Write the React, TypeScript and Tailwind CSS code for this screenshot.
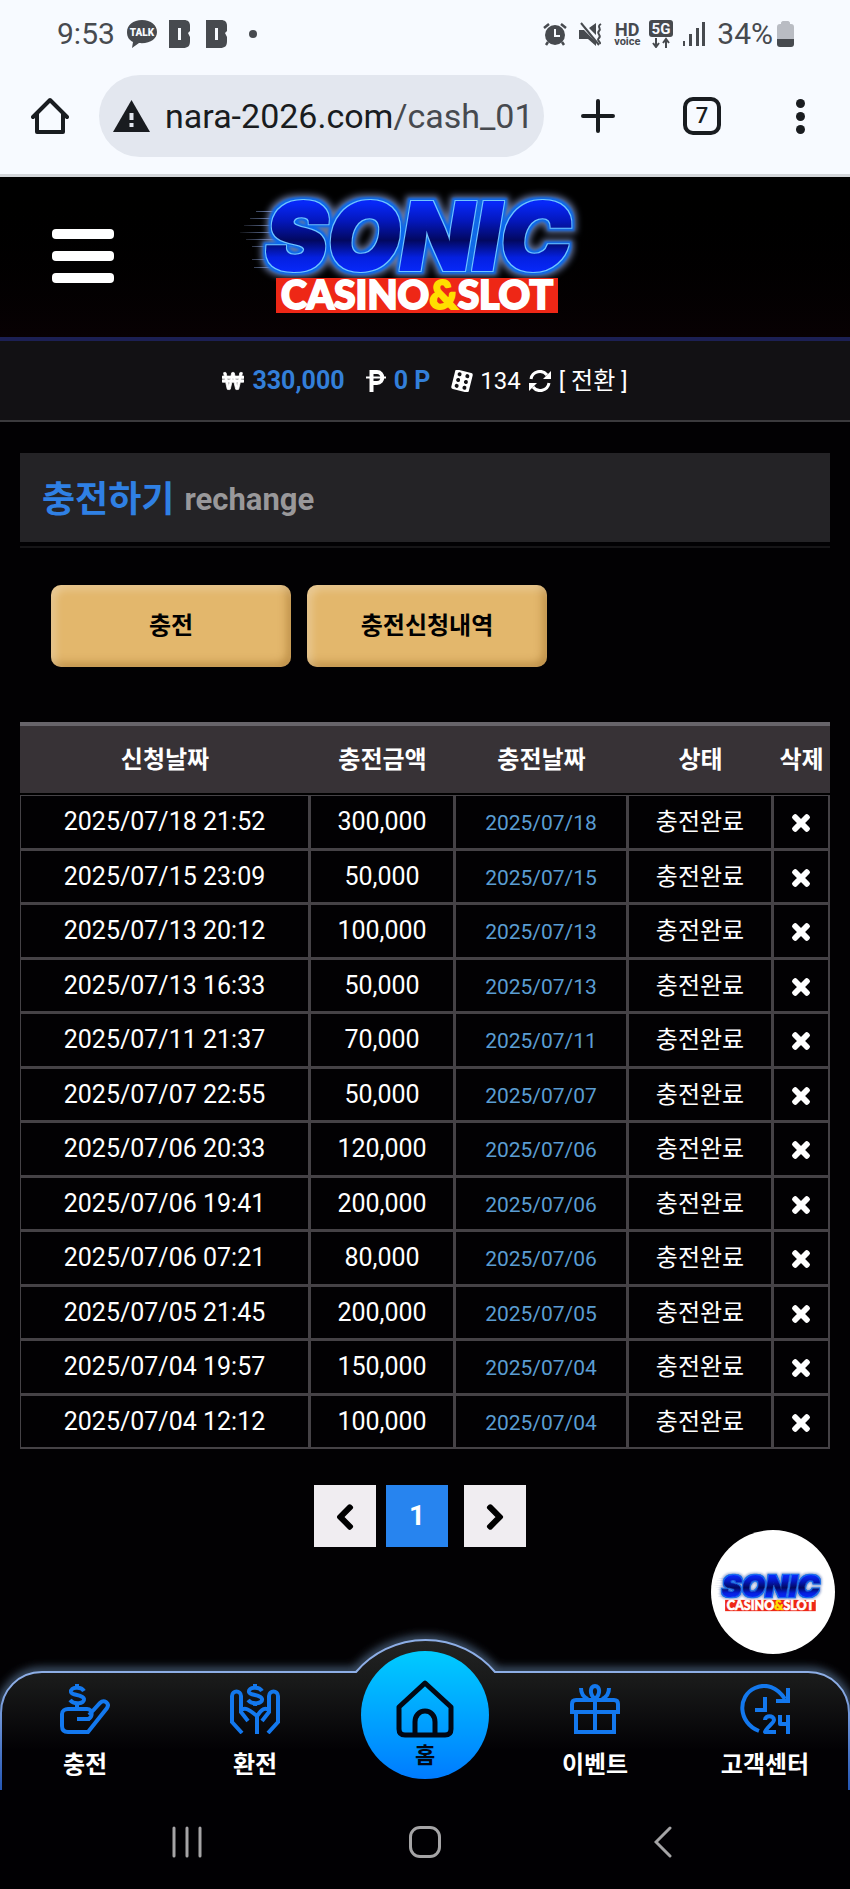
import { useState } from 'react';
import { FaChevronLeft, FaChevronRight, FaTimes, FaWonSign } from 'react-icons/fa';

const rows = [
  { requested: '2025/07/18 21:52', amount: '300,000', charged: '2025/07/18' },
  { requested: '2025/07/15 23:09', amount: '50,000', charged: '2025/07/15' },
  { requested: '2025/07/13 20:12', amount: '100,000', charged: '2025/07/13' },
  { requested: '2025/07/13 16:33', amount: '50,000', charged: '2025/07/13' },
  { requested: '2025/07/11 21:37', amount: '70,000', charged: '2025/07/11' },
  { requested: '2025/07/07 22:55', amount: '50,000', charged: '2025/07/07' },
  { requested: '2025/07/06 20:33', amount: '120,000', charged: '2025/07/06' },
  { requested: '2025/07/06 19:41', amount: '200,000', charged: '2025/07/06' },
  { requested: '2025/07/06 07:21', amount: '80,000', charged: '2025/07/06' },
  { requested: '2025/07/05 21:45', amount: '200,000', charged: '2025/07/05' },
  { requested: '2025/07/04 19:57', amount: '150,000', charged: '2025/07/04' },
  { requested: '2025/07/04 12:12', amount: '100,000', charged: '2025/07/04' },
];

function Logo({ id, className }: { id: string; className: string }) {
  const lines = [[26, 10], [20, 17], [14, 24], [10, 31], [16, 38], [22, 45], [22, 58], [24, 66]];

  return (
    <svg viewBox="10 0 370 140" className={className} role="img" aria-label="SONIC CASINO&SLOT">
      <defs>
        <linearGradient id={id} x1="0" y1="18" x2="0" y2="86" gradientUnits="userSpaceOnUse">
          <stop offset="0" stopColor="#0728f8" />
          <stop offset="0.250" stopColor="#0418c0" />
          <stop offset="0.550" stopColor="#020860" />
          <stop offset="0.800" stopColor="#0420e0" />
          <stop offset="1" stopColor="#0728f8" />
        </linearGradient>
        {/* light rim, blue band and outer haze are all grown from the lettering */}
        <filter id={id + '-glow'} x="-10%" y="-30%" width="120%" height="160%" colorInterpolationFilters="sRGB">
          <feMorphology in="SourceAlpha" operator="dilate" radius="1" result="rimShape" />
          <feFlood floodColor="#6fc4ff" />
          <feComposite in2="rimShape" operator="in" result="rim" />
          <feMorphology in="SourceAlpha" operator="dilate" radius="3" result="bandShape" />
          <feGaussianBlur in="bandShape" stdDeviation="1" result="bandSoft" />
          <feFlood floodColor="#0a68ec" />
          <feComposite in2="bandSoft" operator="in" result="band" />
          <feMorphology in="SourceAlpha" operator="dilate" radius="5" result="hazeShape" />
          <feGaussianBlur in="hazeShape" stdDeviation="3" result="hazeSoft" />
          <feFlood floodColor="#7f93c8" floodOpacity="0.8" />
          <feComposite in2="hazeSoft" operator="in" result="haze" />
          <feMerge>
            <feMergeNode in="haze" />
            <feMergeNode in="band" />
            <feMergeNode in="rim" />
            <feMergeNode in="SourceGraphic" />
          </feMerge>
        </filter>
        <linearGradient id={id + '-line'} gradientUnits="userSpaceOnUse" x1="10" y1="0" x2="50" y2="0">
          <stop offset="0" stopColor="#8a9ac0" stopOpacity="0.100" />
          <stop offset="1" stopColor="#7a9ae0" />
        </linearGradient>
      </defs>
      {lines.map(([x, y]) => (
        <rect key={y} x={x} y={y + 16} width="50" height="1" fill={`url(#${id}-line)`} />
      ))}
      <text x="35" y="85" fontFamily="Inter, sans-serif" fontWeight="900" fontStyle="italic" fontSize="94" fill={`url(#${id})`} stroke={`url(#${id})`} strokeWidth="2" filter={`url(#${id}-glow)`}>
        SONIC
      </text>
      <rect x="46" y="93" width="282" height="35" fill="#ee2716" />
      <text x="187" y="124" textAnchor="middle" fontFamily="Lato, sans-serif" fontWeight="900" fontSize="39" fill="#fff" stroke="#fff" strokeWidth="2">
        CASINO<tspan fill="#ffdf00" stroke="#ffdf00">&amp;</tspan>SLOT
      </text>
    </svg>
  );
}

function StatusBar() {
  return (
    <div className="flex h-[68px] items-center justify-between pl-[57px] pr-[56px] text-[#474a4f]">
      <div className="flex items-center">
        <span className="text-[30px] leading-9">9:53</span>
        <svg viewBox="0 0 30 28" className="ml-3 h-7 w-[30px]">
          <path d="M15 0C6 0 0 5 0 12c0 5 2 8 6 10l-1 6 7-5c11 1 18-4 18-11C30 5 24 0 15 0z" fill="currentColor" />
          <text x="15" y="16" textAnchor="middle" fontFamily="Roboto, sans-serif" fontWeight="900" fontSize="10" fill="#f7faff">TALK</text>
        </svg>
        {[0, 1].map((n) => (
          <svg key={n} viewBox="0 0 21 28" className={n === 0 ? 'ml-3 h-7 w-[21px]' : 'ml-4 h-7 w-[21px]'}>
            <path d="M0 0h15c4 0 6 2 6 6v5l-2 2 2 4v4c0 5-2 7-7 7H0z M9 8v12h3V8z" fill="currentColor" fillRule="evenodd" />
          </svg>
        ))}
        <span className="ml-[22px] h-2 w-2 rounded-full bg-[#474a4f]" />
      </div>
      <div className="flex items-center">
        <svg viewBox="0 0 24 24" className="mr-3 h-6 w-6" fill="none" stroke="currentColor">
          <circle cx="12" cy="13" r="10" fill="currentColor" stroke="none" />
          <path d="M1 6l5-4M23 6l-5-4M5 20l-2 3M19 20l2 3" strokeWidth="2.500" />
          <path d="M12 7v7h5" stroke="#f7faff" strokeWidth="2" />
        </svg>
        <svg viewBox="0 0 24 24" className="mr-[10px] h-6 w-6" fill="currentColor">
          <path d="M0 8h5l12 12v4l-8-7H0zM10 6l7-5v12z" />
          <path d="M2 1l18 22" stroke="currentColor" strokeWidth="2" />
          <path d="M22 2c-5 3 1 4-2 7s3 4 0 7 2 3 1 6" fill="none" stroke="currentColor" strokeWidth="2" />
        </svg>
        <span className="mr-2 flex w-7 flex-col items-center font-bold">
          <span className="text-[18px] leading-[15px]">HD</span>
          <span className="text-[11px] leading-[10px]">voice</span>
        </span>
        <svg viewBox="0 0 24 28" className="mr-[10px] h-7 w-6">
          <rect width="24" height="17" rx="3" fill="currentColor" />
          <text x="12" y="14" textAnchor="middle" fontFamily="Roboto, sans-serif" fontWeight="700" fontSize="15" fill="#f7faff">5G</text>
          <path d="M7 18v8M4 23l3 4 3-4M17 28v-8M14 23l3-4 3 4" fill="none" stroke="currentColor" strokeWidth="2" />
        </svg>
        <svg viewBox="0 0 22 24" className="mr-3 h-6 w-[22px]" fill="currentColor">
          <rect y="19" width="2" height="5" />
          <rect x="6" y="12" width="3" height="12" />
          <rect x="13" y="6" width="3" height="18" />
          <rect x="19" width="3" height="24" />
        </svg>
        <span className="text-[30px] leading-9">34%</span>
        <svg viewBox="0 0 17 26" className="ml-1 h-[26px] w-[17px]">
          <path d="M4 3V2c0-1 1-2 2-2h5c1 0 2 1 2 2v1h1c2 0 3 1 3 3v12H0V6c0-2 1-3 3-3z" fill="#b9bcc3" />
          <path d="M0 18h17v5c0 2-1 3-3 3H3c-2 0-3-1-3-3z" fill="currentColor" />
        </svg>
      </div>
    </div>
  );
}

function BrowserBar() {
  return (
    <div className="flex h-[106px] items-start pt-[7px] text-[#191c20]">
      <button type="button" aria-label="Home" className="flex h-[82px] w-[99px] shrink-0 items-center justify-center">
        <svg viewBox="0 0 38 38" className="h-[38px] w-[38px]" fill="none" stroke="currentColor" strokeWidth="4">
          <path d="M2 20L19 3l17 17M6 17v18h26V17" strokeLinejoin="round" strokeLinecap="round" />
        </svg>
      </button>
      <button type="button" className="flex h-[82px] min-w-0 flex-1 items-center rounded-full bg-[#e3e7ef] pl-[14px] pr-4 text-left">
        <svg viewBox="0 0 37 32" className="mr-[15px] h-8 w-[37px] shrink-0">
          <path d="M18.500 0L37 32H0z" fill="currentColor" />
          <path d="M18.500 13v7M18.500 23v4" stroke="#e3e7ef" strokeWidth="4" />
        </svg>
        <span className="overflow-hidden whitespace-nowrap text-[34px] leading-[44px]">
          nara-2026.com<span className="text-[#474a4f]">/cash_01_</span>
        </span>
      </button>
      <div className="flex h-[82px] w-[306px] shrink-0 items-center pl-[37px]">
        <button type="button" aria-label="New tab">
          <svg viewBox="0 0 34 34" className="h-[34px] w-[34px]" stroke="currentColor" strokeWidth="4" strokeLinecap="round">
            <path d="M17 2v30M2 17h30" />
          </svg>
        </button>
        <button type="button" aria-label="Tabs" className="ml-[68px] flex h-[38px] w-[38px] items-center justify-center rounded-[10px] border-4 border-[#191c20] text-[22px] font-medium leading-6">
          7
        </button>
        <button type="button" aria-label="Menu" className="ml-[75px] flex flex-col gap-1">
          <span className="h-[9px] w-[9px] rounded-full bg-[#191c20]" />
          <span className="h-[9px] w-[9px] rounded-full bg-[#191c20]" />
          <span className="h-[9px] w-[9px] rounded-full bg-[#191c20]" />
        </button>
      </div>
    </div>
  );
}

function BalanceBar() {
  return (
    <div className="flex h-[81px] items-center justify-center border-b-2 border-[#3b3a3d] bg-[#121114] text-2xl">
      <FaWonSign className="mr-2 h-[22px] w-[22px]" stroke="currentColor" strokeWidth="20" />
      <span className="mr-[21px] text-[25px] font-bold text-[#337fd9]">330,000</span>
      <svg viewBox="0 0 20 22" className="mr-2 h-[22px] w-5" fill="none" stroke="currentColor">
        <path d="M5.500 22V2H11c7 0 7 11 0 11H6" strokeWidth="4" />
        <path d="M0 7.500h20" strokeWidth="2" />
      </svg>
      <span className="mr-[21px] text-[25px] font-bold text-[#337fd9]">0 P</span>
      <svg viewBox="0 0 22 22" className="mr-[7px] h-[22px] w-[22px]">
        <g transform="rotate(14 11 11)">
          <rect x="2" y="1" width="18" height="20" rx="2" fill="#fff" />
          {[5, 11, 17].map((y) => (
            <g key={y} fill="#121114">
              <circle cx="7" cy={y} r="2" />
              <circle cx="15" cy={y} r="2" />
            </g>
          ))}
        </g>
      </svg>
      <span className="mr-2">134</span>
      <button type="button" aria-label="Refresh" className="mr-2">
        <svg viewBox="0 0 22 22" className="h-[22px] w-[22px]" fill="none" stroke="currentColor" strokeWidth="3">
          <path d="M2 9a9 9 0 0 1 16-4M20 13a9 9 0 0 1-16 4" />
          <path d="M22 1v8h-8zM0 21v-8h8z" fill="currentColor" stroke="none" />
        </svg>
      </button>
      <button type="button">[ 전환 ]</button>
    </div>
  );
}

function BottomNav() {
  const label = 'text-2xl font-bold leading-[30px]';
  const item = 'flex flex-col items-center gap-4 pt-3';

  return (
    <nav className="relative h-[118px]">
      <svg viewBox="0 0 850 165" preserveAspectRatio="none" className="absolute bottom-0 left-0 h-[165px] w-full overflow-hidden" fill="none">
        <defs>
          <linearGradient id="navFill" x1="0" y1="15" x2="0" y2="125" gradientUnits="userSpaceOnUse">
            <stop offset="0" stopColor="#232424" />
            <stop offset="0.400" stopColor="#181919" />
            <stop offset="1" stopColor="#020104" />
          </linearGradient>
          <linearGradient id="navLine" x1="0" y1="15" x2="0" y2="165" gradientUnits="userSpaceOnUse">
            <stop offset="0.300" stopColor="#8daee6" />
            <stop offset="1" stopColor="#2456b4" />
          </linearGradient>
          <filter id="navGlow" x="-5%" y="-20%" width="110%" height="140%">
            <feGaussianBlur stdDeviation="5" />
          </filter>
        </defs>
        <path d="M1 165V88C1 65 19 47 42 47H356A91.500 91.500 0 0 1 495 47H808C831 47 849 65 849 88V165" stroke="#55708f" strokeWidth="7" filter="url(#navGlow)" />
        <path d="M1 165V88C1 65 19 47 42 47H356A91.500 91.500 0 0 1 495 47H808C831 47 849 65 849 88V165" fill="url(#navFill)" stroke="url(#navLine)" strokeWidth="2" />
      </svg>
      <div className="relative grid grid-cols-5">
        <a href="#charge" className={item}>
          <svg viewBox="0 0 50 50" className="h-[50px] w-[50px]" fill="none" stroke="#1378ee" strokeWidth="4">
            <path d="M17 19v6M30 35H17M19 35h9c5-1 5-10-1-10H8c-3 0-6 2-6 5v12c0 4 2 6 6 6h20l19-24c3-5-3-9-7-5L29 31" />
            <path d="M17 0v4M24 7c-3-5-14-4-13 1 1 4 12 2 13 7 1 5-10 6-14 1" />
          </svg>
          <span className={label}>충전</span>
        </a>
        <a href="#withdraw" className={item}>
          <svg viewBox="0 0 50 50" className="h-[50px] w-[50px]" fill="none" stroke="#1378ee" strokeWidth="4">
            <path d="M12 49L2 38V12c0-6 9-6 9 0v16l7 9M11 26c4-3 7-1 16 6M38 49l10-11V12c0-6-9-6-9 0v16l-7 9M39 26c-4-3-7-1-12 6v18" />
            <path d="M25 0v4M32 7c-3-5-14-4-13 1 1 4 12 2 13 7 1 5-10 6-14 1M25 18v4" />
          </svg>
          <span className={label}>환전</span>
        </a>
        <a href="#home" className="-mt-[21px] flex h-32 w-32 flex-col items-center justify-self-center rounded-full bg-linear-to-b from-[#00cbff] to-[#007bff] pt-[29px] text-[#020814]">
          <svg viewBox="0 0 58 58" className="mb-[6px] h-[58px] w-[58px]" fill="none" stroke="#020814" strokeWidth="5" strokeLinejoin="round">
            <path d="M3 27L29 3l26 24v22c0 4-2 6-6 6H9c-4 0-6-2-6-6z" />
            <path d="M19 55V42c0-6 4-11 10-11s10 5 10 11v13" />
          </svg>
          <span className="text-[22px] font-bold leading-6">홈</span>
        </a>
        <a href="#event" className={item}>
          <svg viewBox="0 0 50 50" className="h-[50px] w-[50px]" fill="none" stroke="#1378ee" strokeWidth="4">
            <path d="M2 28v-8c0-3 2-4 4-4h38c2 0 4 1 4 4v8zM6 28v20h38V28M25 16v32" />
            <path d="M25 15c-6-5-5-13 0-13s6 8 0 13zM11 4c0 5 2 9 7 11M39 4c0 5-2 9-7 11" />
          </svg>
          <span className={label}>이벤트</span>
        </a>
        <a href="#support" className={item}>
          <svg viewBox="0 0 50 50" className="h-[50px] w-[50px]" fill="none" stroke="#1378ee" strokeWidth="4">
            <path d="M19 47C-2 39-3 12 15 4c11-5 22-1 30 11M48 4v13H36M25 13v13H15" />
            <path d="M25 36c0-5 9-5 9 0 0 3-8 8-9 12h11M40 31v9h8M48 31v19" strokeLinejoin="round" />
          </svg>
          <span className={label}>고객센터</span>
        </a>
      </div>
    </nav>
  );
}

function SystemNav() {
  return (
    <div className="grid h-[99px] grid-cols-[187fr_476fr_187fr] bg-[#010003] pt-9 text-[#a5a4a6]">
      <button type="button" aria-label="Recents" className="h-8 justify-self-end">
        <svg viewBox="0 0 30 32" className="h-8 w-[30px] translate-x-1/2" stroke="currentColor" strokeWidth="3" strokeLinecap="round">
          <path d="M2 2v28M15 2v28M28 2v28" />
        </svg>
      </button>
      <button type="button" aria-label="Home screen" className="h-8 w-8 justify-self-center rounded-[11px] border-3 border-[#a5a4a6]" />
      <button type="button" aria-label="Back" className="h-8 justify-self-start">
        <svg viewBox="0 0 18 32" className="h-8 w-[18px] -translate-x-1/2" fill="none" stroke="currentColor" strokeWidth="3" strokeLinecap="round">
          <path d="M16 2L2 16l14 14" />
        </svg>
      </button>
    </div>
  );
}

export default function App() {
  const [history, setHistory] = useState(rows);

  const handleDelete = (index: number) => {
    setHistory(history.filter((_, i) => i !== index));
  };

  const cell = 'border-b-2 border-l border-r-2 border-t border-[#454246]';

  return (
    <div className="relative flex min-h-screen flex-col bg-[#020103] font-[Roboto,'Noto_Sans_CJK_KR',sans-serif] text-white">
      <div className="border-b-3 border-[#d3d6da] bg-[#f7faff]">
        <StatusBar />
        <BrowserBar />
      </div>

      <header className="grid h-[164px] grid-cols-[1fr_370px_1fr] items-start border-b-4 border-[#1c2054] bg-linear-to-b from-black to-[#080103]">
        <button type="button" aria-label="Open menu" className="ml-[52px] mt-[52px] flex w-[62px] flex-col gap-3">
          <span className="h-[10px] rounded-sm bg-white" />
          <span className="h-[10px] rounded-sm bg-white" />
          <span className="h-[10px] rounded-sm bg-white" />
        </button>
        <a href="#main" className="mt-2">
          <Logo id="logoTop" className="h-[140px] w-[370px]" />
        </a>
      </header>
      <BalanceBar />

      <main className="px-5 pt-[31px]">
        <div className="border-b-2 border-[#161517] pb-1">
          <h1 className="flex h-[89px] items-center bg-[#242326] pl-[22px] pt-1 text-4xl font-bold text-[#2f80e4]">
            충전하기<small className="ml-[10px] mt-[2px] text-[31px] font-bold text-[#99989a]">rechange</small>
          </h1>
        </div>

        <div className="mt-[37px] flex gap-4 px-[31px]">
          <button type="button" className="h-[82px] w-60 rounded-[10px] bg-[#e3b76c] text-2xl font-bold text-black shadow-[inset_4px_4px_8px_rgba(255,255,255,0.3),inset_-4px_-4px_8px_rgba(120,70,0,0.35)]">
            충전
          </button>
          <button type="button" className="h-[82px] w-60 rounded-[10px] bg-[#e3b76c] text-2xl font-bold text-black shadow-[inset_4px_4px_8px_rgba(255,255,255,0.3),inset_-4px_-4px_8px_rgba(120,70,0,0.35)]">
            충전신청내역
          </button>
        </div>

        <table className="mt-[55px] w-full table-fixed border-separate border-spacing-0 text-center text-2xl">
          <colgroup>
            <col />
            <col className="w-[145px]" />
            <col className="w-[173px]" />
            <col className="w-[145px]" />
            <col className="w-[57px]" />
          </colgroup>
          <thead>
            <tr className="h-[73px] whitespace-nowrap">
              {['신청날짜', '충전금액', '충전날짜', '상태', '삭제'].map((title) => (
                <th key={title} className="border-b-2 border-t-4 border-b-black border-t-[#67646a] bg-[#373236] bg-clip-padding p-0 font-bold">{title}</th>
              ))}
            </tr>
          </thead>
          <tbody>
            {history.map((row, index) => (
              <tr key={row.requested} className="h-[55px] even:h-[54px]">
                <td className={cell + ' text-[25px] leading-8'}>{row.requested}</td>
                <td className={cell + ' text-[25px] leading-8'}>{row.amount}</td>
                <td className={cell + ' pt-[2px] text-[21px] leading-8 text-[#5a9dd2]'}>{row.charged}</td>
                <td className={cell + ' leading-8'}>충전완료</td>
                <td className={cell}>
                  <button type="button" aria-label="삭제" className="block w-full pt-[2px]" onClick={() => handleDelete(index)}>
                    <FaTimes className="mx-auto h-6 w-5" stroke="currentColor" strokeWidth="30" />
                  </button>
                </td>
              </tr>
            ))}
          </tbody>
        </table>

        <div className="mr-[10px] mt-9 flex justify-center">
          <button type="button" aria-label="이전" className="flex h-[62px] w-[62px] items-center justify-center bg-[#f0edf1] pt-[2px] text-black">
            <FaChevronLeft className="h-7 w-5" stroke="currentColor" strokeWidth="30" />
          </button>
          <button type="button" className="ml-[10px] h-[62px] w-[62px] bg-[#2784ef] text-[28px] font-bold">
            1
          </button>
          <button type="button" aria-label="다음" className="ml-4 flex h-[62px] w-[62px] items-center justify-center bg-[#f0edf1] pt-[2px] text-black">
            <FaChevronRight className="h-7 w-5" stroke="currentColor" strokeWidth="30" />
          </button>
        </div>
      </main>

      <div className="mt-auto">
        <BottomNav />
        <SystemNav />
      </div>

      <a href="#chat" className="absolute bottom-[235px] right-[15px] flex h-[124px] w-[124px] items-center justify-center rounded-full bg-white">
        <Logo id="logoChat" className="h-[45px] w-[120px] shrink-0" />
      </a>
    </div>
  );
}
